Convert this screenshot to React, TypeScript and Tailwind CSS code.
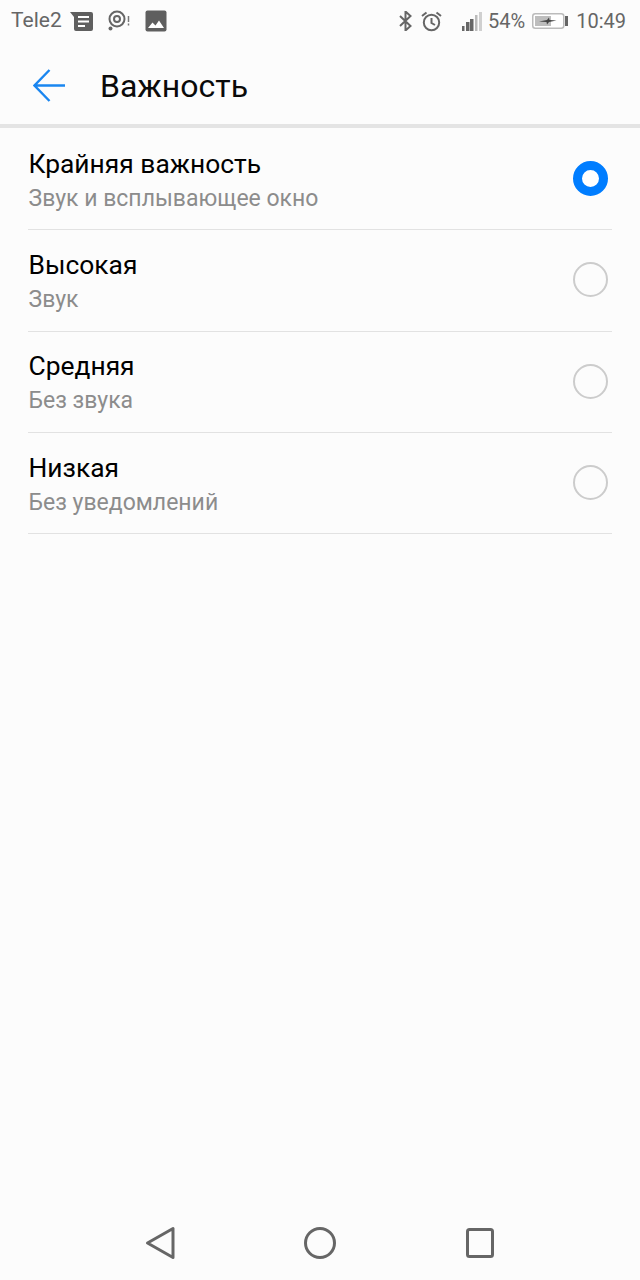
const options = [
  { title: "Крайняя важность", subtitle: "Звук и всплывающее окно", selected: true },
  { title: "Высокая", subtitle: "Звук", selected: false },
  { title: "Средняя", subtitle: "Без звука", selected: false },
  { title: "Низкая", subtitle: "Без уведомлений", selected: false },
]

function StatusBar() {
  return (
    <div className="flex h-[48px] items-center justify-between pb-[6px] pl-[11px] pr-[14px] text-[20px] text-[#666666]">
      <div className="flex items-center">
        <span className="text-[21px]">Tele2</span>
        <svg className="ml-[8px]" width="23" height="19" viewBox="0 0 23 19">
          <path d="M0 0h21a2 2 0 0 1 2 2v15a2 2 0 0 1-2 2H6a2 2 0 0 1-2-2V5z" fill="#5f5f5f" />
          <path d="M8 5h11M8 9.500h11M8 14h7" stroke="#fff" strokeWidth="2" />
        </svg>
        <svg className="ml-[15px]" width="24" height="22" viewBox="0 0 24 22" fill="none">
          <circle cx="9" cy="9" r="7.500" stroke="#666" strokeWidth="2" />
          <circle cx="9" cy="9" r="3" stroke="#666" strokeWidth="2" />
          <circle cx="2.500" cy="18.500" r="2" fill="#666" />
          <path d="M20.500 6v6M20.500 13.500v2" stroke="#777" strokeWidth="1.500" />
        </svg>
        <svg className="ml-[13px]" width="22" height="22" viewBox="0 0 22 22">
          <rect x="0.500" y="0.500" width="21" height="21" rx="2" fill="#5f5f5f" />
          <path d="M3 18l4.500-5.500 3 3 3.500-5 5 7.500z" fill="#fff" />
        </svg>
      </div>
      <div className="flex items-center">
        <svg width="15" height="20" viewBox="0 0 15 20" fill="none">
          <path d="M2 5l10.500 10L7.500 19.500V.5l5 4.500L2 15" stroke="#666" strokeWidth="2" />
        </svg>
        <svg className="ml-[8px]" width="21" height="21" viewBox="0 0 21 21" fill="none">
          <circle cx="10.500" cy="11.500" r="7.700" stroke="#666" strokeWidth="2" />
          <path d="M10.500 7v5l3.500 2M1 5l4.500-3.500M20 5l-4.500-3.500" stroke="#666" strokeWidth="2" />
        </svg>
        <svg className="ml-[20px]" width="20" height="19" viewBox="0 0 20 19">
          <rect x="0" y="14" width="2.500" height="5" fill="#666" />
          <rect x="4" y="10" width="3.500" height="9" fill="#666" />
          <rect x="8" y="7" width="3.500" height="12" fill="#666" />
          <rect x="13" y="3" width="2.500" height="16" fill="#bbb" />
          <rect x="17" y="0" width="3" height="19" fill="#d0d0d0" />
        </svg>
        <span className="ml-[6px]">54%</span>
        <svg className="ml-[7px]" width="36" height="16" viewBox="0 0 36 16">
          <rect x="0.750" y="0.750" width="31" height="14.500" rx="2.500" fill="#fff" stroke="#bbb" strokeWidth="1.500" />
          <rect x="3" y="3" width="16" height="10" fill="#bdbdbd" />
          <path d="M7 8.500l8-1.500 2-2.500.5 2.500 7 .5-7.500 1.500-2 2.500-.5-2.500z" fill="#444" />
          <rect x="33" y="3" width="3" height="10" fill="#666" />
        </svg>
        <span className="ml-[8px]">10:49</span>
      </div>
    </div>
  )
}

function Radio({ selected }: { selected: boolean }) {
  if (selected) {
    return <div className="mb-px h-[35px] w-[35px] rounded-full border-[9px] border-[#007dff] bg-white" />
  }
  return <div className="mb-px h-[35px] w-[35px] rounded-full border-2 border-[#cccccc]" />
}

export default function App() {
  return (
    <div className="flex h-[1280px] w-[640px] flex-col bg-[#fcfcfc] font-['Roboto','Noto_Sans',sans-serif]">
      <StatusBar />
      <div className="flex h-[80px] items-center border-b-[4px] border-[#e4e4e4] pl-[33px]">
        <svg className="mb-[2px]" width="32" height="33" viewBox="0 0 32 33" fill="none">
          <path d="M1.500 16.500H32M16.500 1L1.500 16.500L16.500 32" stroke="#1a86f0" strokeWidth="2.400" />
        </svg>
        <h1 className="ml-[35px] text-[32px] text-[#0a0a0a]">Важность</h1>
      </div>
      <div className="mt-px flex-1 px-[28px]">
        {options.map((option) => (
          <div key={option.title} className="flex h-[101.33px] items-center justify-between border-b border-[#e2e2e2] pr-[4px]">
            <div className="pl-[0.5px] pt-[4px]">
              <div className="text-[26.4px] leading-[34px] text-black">{option.title}</div>
              <div className="mt-px text-[23px] leading-[34px] text-[#8c8c8c]">{option.subtitle}</div>
            </div>
            <Radio selected={option.selected} />
          </div>
        ))}
      </div>
      <div className="flex h-[54px] items-start pl-[144px]">
        <svg width="32" height="34" viewBox="0 0 32 34" fill="none">
          <path d="M29 2.500v29L3.500 17z" stroke="#666" strokeWidth="3" strokeLinejoin="round" />
        </svg>
        <svg className="ml-[128px]" width="32" height="34" viewBox="0 0 32 34" fill="none">
          <circle cx="16" cy="17" r="14.500" stroke="#666" strokeWidth="3" />
        </svg>
        <svg className="ml-[128px]" width="32" height="34" viewBox="0 0 32 34" fill="none">
          <rect x="3.500" y="3.500" width="25" height="27" rx="2" stroke="#666" strokeWidth="3" />
        </svg>
      </div>
    </div>
  )
}
